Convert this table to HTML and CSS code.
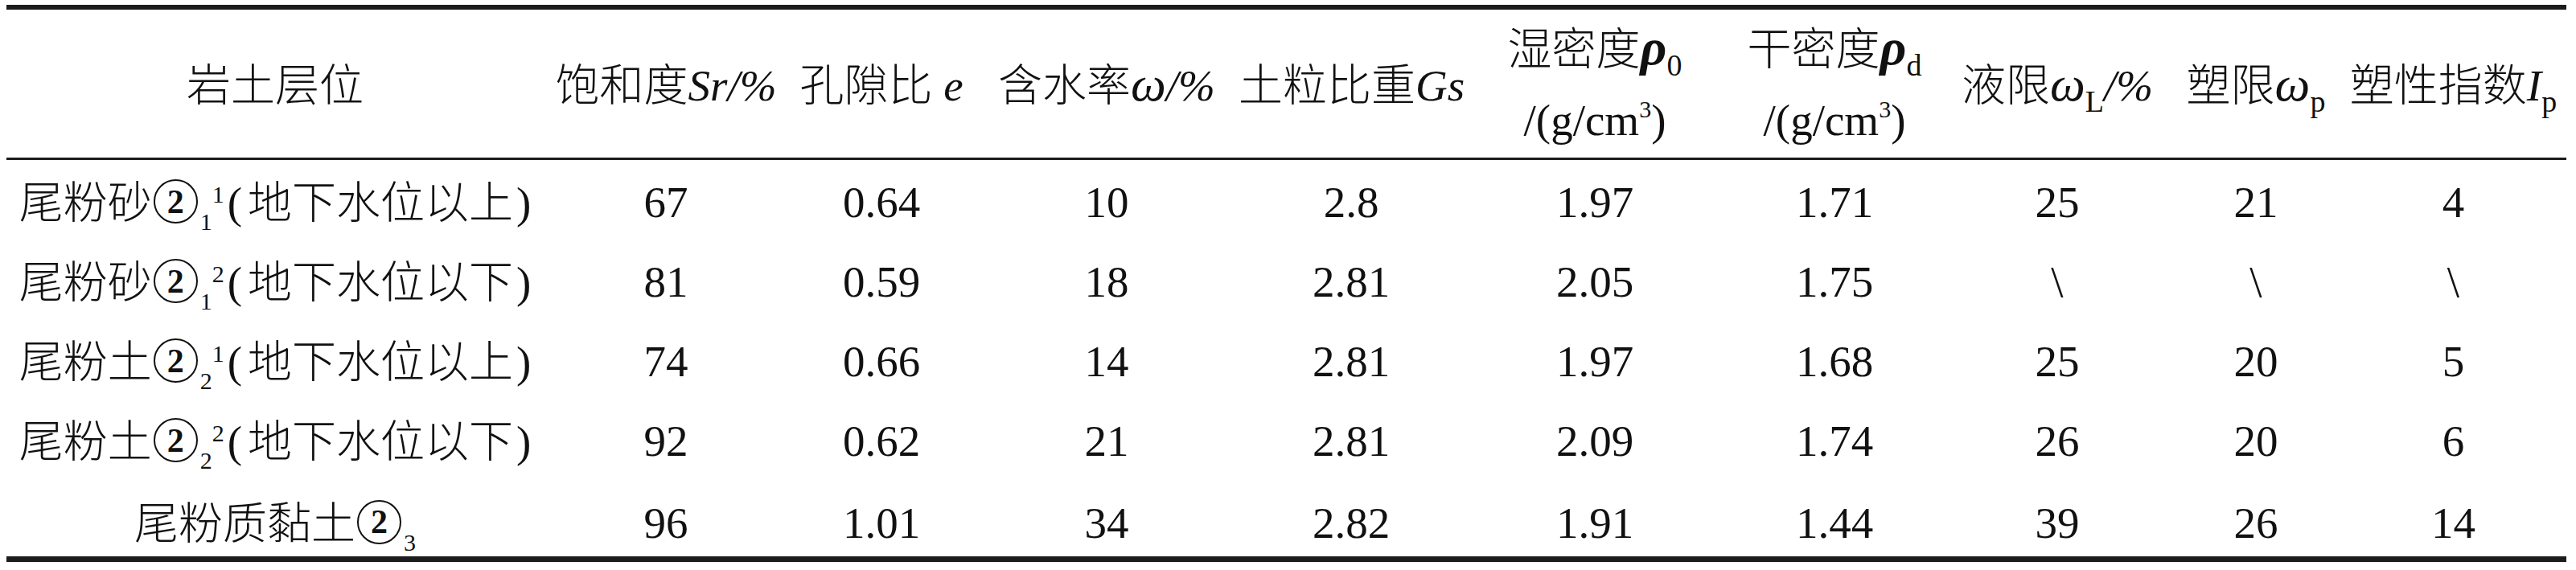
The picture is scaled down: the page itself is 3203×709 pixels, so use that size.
FILE: index.html
```html
<!DOCTYPE html>
<html lang="zh-CN">
<head>
<meta charset="utf-8">
<title>岩土层位物理参数表</title>
<link rel="stylesheet" href="styles.css">
</head>
<body>
<div class="page">
<table class="t">
<colgroup>
<col class="c1"><col class="c2"><col class="c3"><col class="c4"><col class="c5">
<col class="c6"><col class="c7"><col class="c8"><col class="c9"><col class="c10">
</colgroup>
<thead>
<tr>
<th>岩土层位</th>
<th>饱和度<i>Sr/%</i></th>
<th>孔隙比 <i>e</i></th>
<th>含水率<i class="gk">ω</i><i>/%</i></th>
<th>土粒比重<i>Gs</i></th>
<th class="two">湿密度<b class="rho"><i>ρ</i></b><span class="hs">0</span><br>/(g/cm<span class="hp">3</span>)</th>
<th class="two">干密度<b class="rho"><i>ρ</i></b><span class="hs">d</span><br>/(g/cm<span class="hp">3</span>)</th>
<th>液限<i class="gk">ω</i><span class="hs">L</span><i>/%</i></th>
<th>塑限<i class="gk">ω</i><span class="hs">p</span></th>
<th>塑性指数<i>I</i><span class="hs">p</span></th>
</tr>
</thead>
<tbody>
<tr>
<td>尾粉砂<span class="circ">2</span><span class="rs">1</span><span class="rp">1</span><span class="lp">(</span>地下水位以上<span class="rpn">)</span></td>
<td>67</td><td>0.64</td><td>10</td><td>2.8</td><td>1.97</td><td>1.71</td><td>25</td><td>21</td><td>4</td>
</tr>
<tr>
<td>尾粉砂<span class="circ">2</span><span class="rs">1</span><span class="rp">2</span><span class="lp">(</span>地下水位以下<span class="rpn">)</span></td>
<td>81</td><td>0.59</td><td>18</td><td>2.81</td><td>2.05</td><td>1.75</td><td>\</td><td>\</td><td>\</td>
</tr>
<tr>
<td>尾粉土<span class="circ">2</span><span class="rs">2</span><span class="rp">1</span><span class="lp">(</span>地下水位以上<span class="rpn">)</span></td>
<td>74</td><td>0.66</td><td>14</td><td>2.81</td><td>1.97</td><td>1.68</td><td>25</td><td>20</td><td>5</td>
</tr>
<tr>
<td>尾粉土<span class="circ">2</span><span class="rs">2</span><span class="rp">2</span><span class="lp">(</span>地下水位以下<span class="rpn">)</span></td>
<td>92</td><td>0.62</td><td>21</td><td>2.81</td><td>2.09</td><td>1.74</td><td>26</td><td>20</td><td>6</td>
</tr>
<tr class="last">
<td>尾粉质黏土<span class="circ">2</span><span class="rs">3</span></td>
<td>96</td><td>1.01</td><td>34</td><td>2.82</td><td>1.91</td><td>1.44</td><td>39</td><td>26</td><td>14</td>
</tr>
</tbody>
</table>
</div>
</body>
</html>
```

FILE: styles.css
```css
html, body {
  margin: 0;
  padding: 0;
  background: #ffffff;
}

.page {
  padding: 6px 12px 0 8px;
}

.t {
  border-collapse: separate;
  border-spacing: 0;
  table-layout: fixed;
  width: 3183px;
  font-family: "Liberation Serif", "Noto Sans CJK SC", serif;
  font-size: 55px;
  font-weight: 300;
  color: #111111;
}

.c1 { width: 668px; }
.c2 { width: 304px; }
.c3 { width: 232px; }
.c4 { width: 328px; }
.c5 { width: 280px; }
.c6 { width: 326px; }
.c7 { width: 270px; }
.c8 { width: 284px; }
.c9 { width: 210px; }
.c10 { width: 281px; }

.t th,
.t td {
  padding: 0;
  text-align: center;
  vertical-align: middle;
  white-space: nowrap;
  font-weight: 300;
  line-height: 55px;
}

.t thead tr {
  height: 193px;
}

.t th {
  border-top: 6px solid #1c1c1c;
  border-bottom: 3px solid #1c1c1c;
  padding-top: 4px;
}

.t th.two {
  line-height: 88px;
}

.t tbody tr {
  height: 99px;
}

.t td {
  padding-top: 6px;
}

.t tbody tr.last {
  height: 104px;
}

.t tr.last td {
  padding-top: 13px;
  border-bottom: 7px solid #1c1c1c;
}

.gk {
  font-size: 62px;
  line-height: 0;
}

.rho {
  font-weight: 700;
  font-size: 64px;
  line-height: 0;
}

.hs {
  font-size: 38px;
  line-height: 0;
  vertical-align: -14px;
}

.hp {
  font-size: 30px;
  line-height: 0;
  vertical-align: 22px;
}

.circ {
  display: inline-flex;
  align-items: center;
  justify-content: center;
  box-sizing: border-box;
  width: 55px;
  height: 55px;
  margin: 0 3px 0 2px;
  border: 2px solid #111111;
  border-radius: 50%;
  font-size: 42px;
  line-height: 42px;
  font-weight: 700;
  vertical-align: 6px;
}

.rs {
  font-size: 30px;
  line-height: 0;
  vertical-align: -15px;
}

.rp {
  font-size: 30px;
  line-height: 0;
  vertical-align: 19px;
}

.lp {
  margin: 0 7px 0 4px;
}

.rpn {
  margin-left: 4px;
}
```
